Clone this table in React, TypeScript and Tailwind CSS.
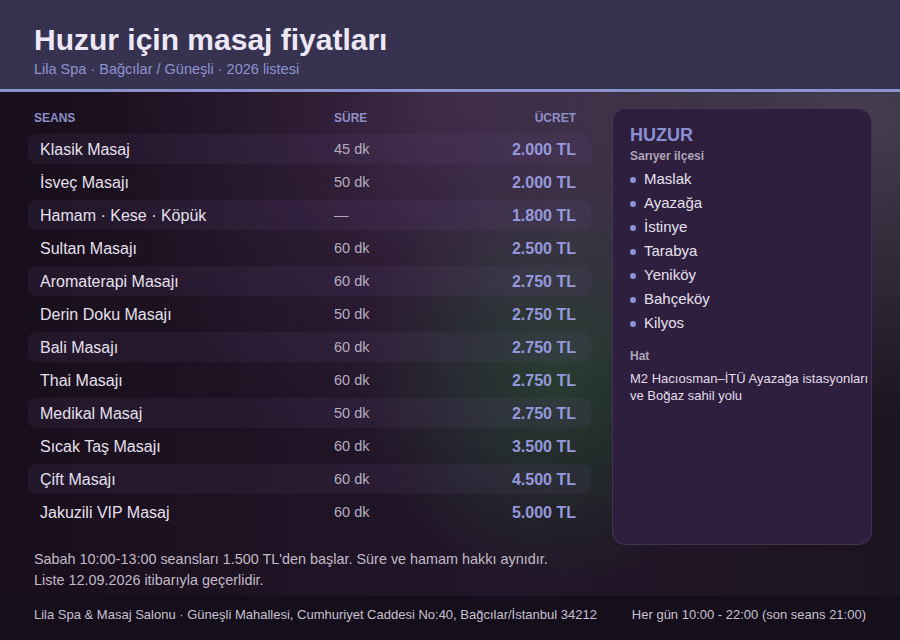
const rows = [
  { name: 'Klasik Masaj', time: '45 dk', price: '2.000 TL' },
  { name: 'İsveç Masajı', time: '50 dk', price: '2.000 TL' },
  { name: 'Hamam · Kese · Köpük', time: '—', price: '1.800 TL' },
  { name: 'Sultan Masajı', time: '60 dk', price: '2.500 TL' },
  { name: 'Aromaterapi Masajı', time: '60 dk', price: '2.750 TL' },
  { name: 'Derin Doku Masajı', time: '50 dk', price: '2.750 TL' },
  { name: 'Bali Masajı', time: '60 dk', price: '2.750 TL' },
  { name: 'Thai Masajı', time: '60 dk', price: '2.750 TL' },
  { name: 'Medikal Masaj', time: '50 dk', price: '2.750 TL' },
  { name: 'Sıcak Taş Masajı', time: '60 dk', price: '3.500 TL' },
  { name: 'Çift Masajı', time: '60 dk', price: '4.500 TL' },
  { name: 'Jakuzili VIP Masaj', time: '60 dk', price: '5.000 TL' },
]

const areas = ['Maslak', 'Ayazağa', 'İstinye', 'Tarabya', 'Yeniköy', 'Bahçeköy', 'Kilyos']

export default function App() {
  return (
    <div className="w-[900px] h-[640px] overflow-hidden flex flex-col bg-[#1c1220] font-['Liberation_Sans',Arial,sans-serif]">
      <header className="bg-[#363250] border-b-[3px] border-[#8b93cc] px-[34px] pt-[24px] pb-[11px]">
        <h1 className="text-[30px] leading-[32px] font-bold text-[#ece8f8]">Huzur için masaj fiyatları</h1>
        <p className="mt-[4px] text-[14.5px] leading-[18px] text-[#8f92d0]">Lila Spa · Bağcılar / Güneşli · 2026 listesi</p>
      </header>

      <main className="flex-1 flex flex-col bg-[radial-gradient(ellipse_at_95%_5%,rgba(95,90,110,0.6),transparent_45%),radial-gradient(ellipse_22%_42%_at_62%_56%,rgba(40,90,50,0.55),transparent_100%),radial-gradient(ellipse_at_50%_0%,rgba(82,50,92,0.5),transparent_55%),linear-gradient(90deg,#190e1b,#22172a_55%,#1c1420)]">
        <div className="flex gap-[21px] pl-[28px] pt-[16px]">
          <section className="w-[563px]">
            <div className="h-[20px] flex items-center px-[6px] pr-[15px] text-[12px] font-bold text-[#8d8fc8]">
              <span className="w-[300px]">SEANS</span>
              <span>SÜRE</span>
              <span className="ml-auto">ÜCRET</span>
            </div>
            <div className="mt-[6px] flex flex-col gap-[3px]">
              {rows.map((r, i) => (
                <div key={r.name} className={`h-[30px] pt-[2px] flex items-center pl-[12px] pr-[15px] rounded-[8px] ${i % 2 === 0 ? 'bg-[rgba(110,80,150,0.12)]' : ''}`}>
                  <span className="w-[294px] text-[16px] text-[#e6e0ee]">{r.name}</span>
                  <span className="text-[14.5px] text-[#b5aec0]">{r.time}</span>
                  <span className="ml-auto text-[16px] font-bold text-[#9599dc]">{r.price}</span>
                </div>
              ))}
            </div>
          </section>

          <aside className="w-[260px] h-[437px] rounded-[14px] border border-white/10 bg-[#2e1f3e] px-[17px] pt-[15px]">
            <h2 className="text-[18px] leading-[22px] font-bold text-[#8a8fd0]">HUZUR</h2>
            <p className="mt-[2px] text-[12px] leading-[16px] font-bold text-[#b0a6b8]">Sarıyer ilçesi</p>
            <ul className="mt-[3px]">
              {areas.map(a => (
                <li key={a} className="h-[24px] flex items-center gap-[8px] text-[15px] text-[#e6e0ee]">
                  <span className="w-[6px] h-[6px] mt-[2px] rounded-full bg-[#8f93d8]" />
                  {a}
                </li>
              ))}
            </ul>
            <p className="mt-[13px] text-[12px] leading-[16px] font-bold text-[#b0a6b8]">Hat</p>
            <p className="mt-[6px] text-[13px] leading-[17px] text-[#e2dcea] whitespace-nowrap">
              M2 Hacıosman–İTÜ Ayazağa istasyonları<br />ve Boğaz sahil yolu
            </p>
          </aside>
        </div>

        <div className="mt-[4px] px-[34px] text-[14.4px] leading-[21px] text-[#c2bac8]">
          <p>Sabah 10:00-13:00 seansları 1.500 TL'den başlar. Süre ve hamam hakkı aynıdır.</p>
          <p>Liste 12.09.2026 itibarıyla geçerlidir.</p>
        </div>
      </main>

      <footer className="h-[44px] shrink-0 bg-[#150f1c] px-[34px] pt-[11px] flex justify-between text-[13px] leading-[16px] text-[#c8c0d0]">
        <span>Lila Spa &amp; Masaj Salonu · Güneşli Mahallesi, Cumhuriyet Caddesi No:40, Bağcılar/İstanbul 34212</span>
        <span>Her gün 10:00 - 22:00 (son seans 21:00)</span>
      </footer>
    </div>
  )
}
